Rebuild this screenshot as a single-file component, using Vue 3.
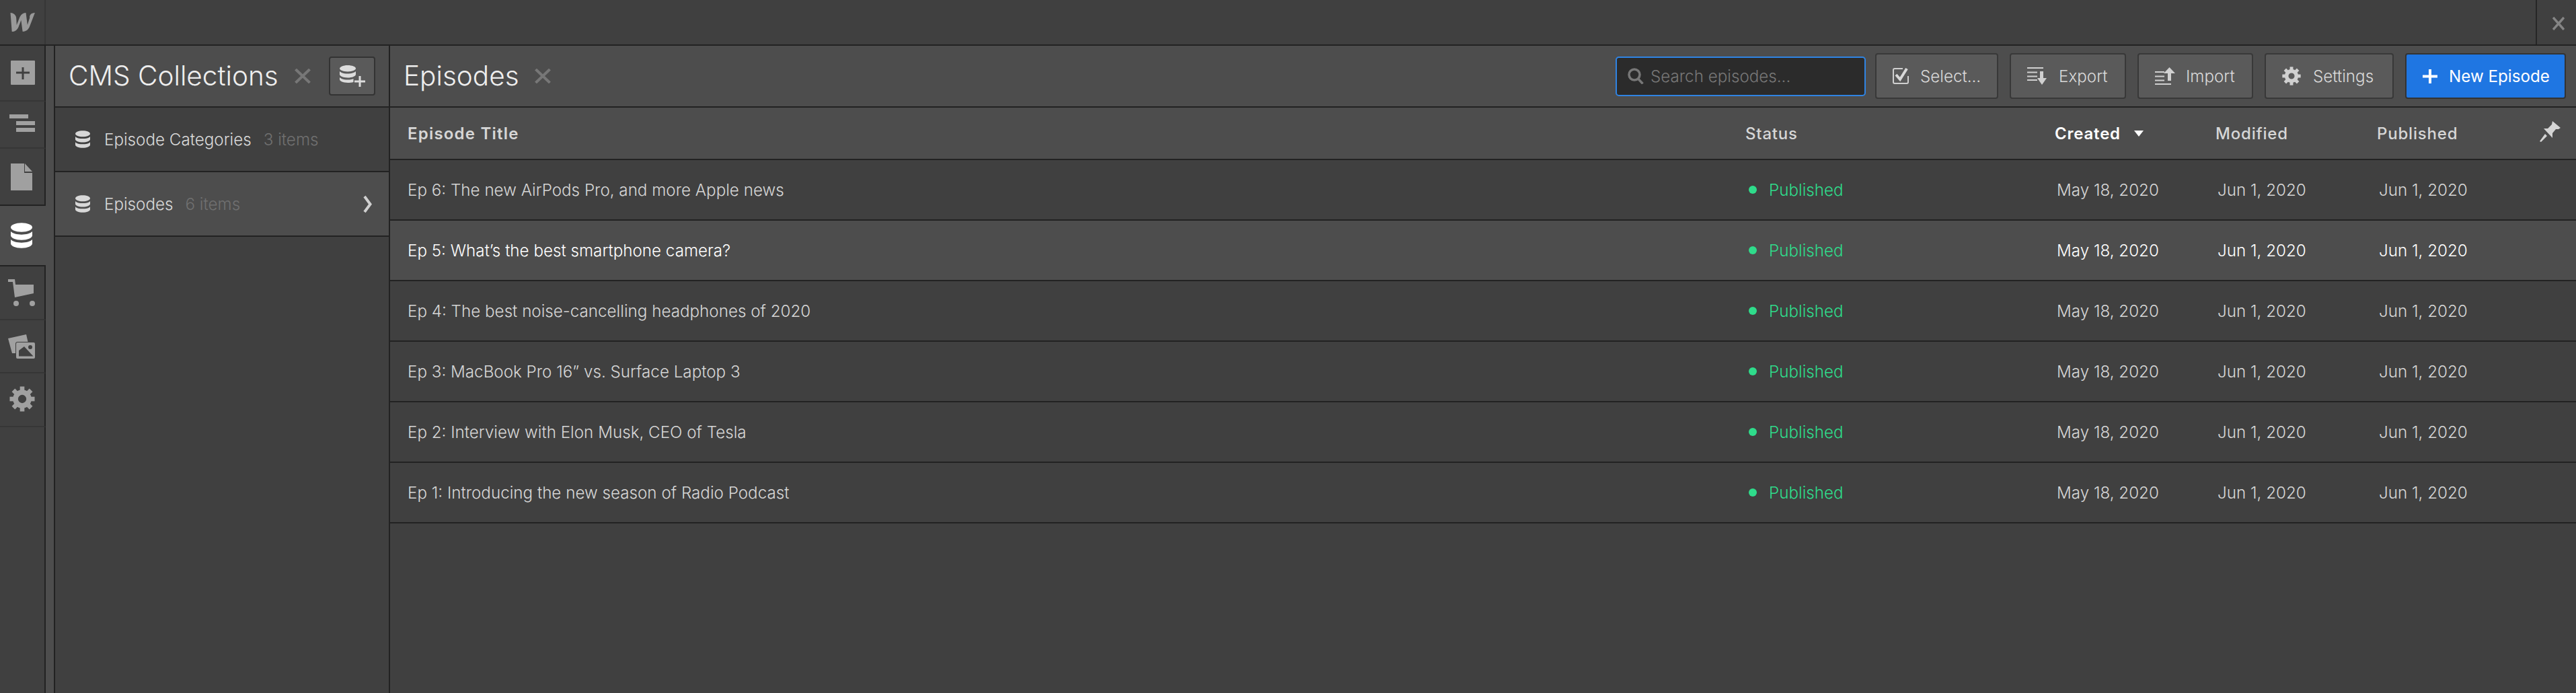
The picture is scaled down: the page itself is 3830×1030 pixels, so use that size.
<script setup>
const rows = [
  { title: 'Ep 6: The new AirPods Pro, and more Apple news' },
  { title: 'Ep 5: What’s the best smartphone camera?', hover: true },
  { title: 'Ep 4: The best noise-cancelling headphones of 2020' },
  { title: 'Ep 3: MacBook Pro 16” vs. Surface Laptop 3' },
  { title: 'Ep 2: Interview with Elon Musk, CEO of Tesla' },
  { title: 'Ep 1: Introducing the new season of Radio Podcast' }
]
const teeth = [0, 45, 90, 135, 180, 225, 270, 315]
const dbPaths = [
  'M12 0C18.6 0 24 2.2 24 5s-5.4 5-12 5S0 7.800 0 5s5.400-5 12-5Z',
  'M0 9.500C2 11.800 7 13 12 13s10-1.200 12-3.500V14c0 2.800-5.400 5-12 5S0 16.800 0 14Z',
  'M0 18.500C2 20.800 7 22 12 22s10-1.200 12-3.500V23c0 2.800-5.400 5-12 5S0 25.800 0 23Z'
]
</script>

<template>
  <div class="app">
    <header class="topbar">
      <div class="logo-cell">
        <svg class="logo" viewBox="0 0 37 28"><path d="M28.700 7.400s-3.100 9.700-3.300 10.300C25.300 17 23 0 23 0c-5.300 0-8.100 3.800-9.600 7.800 0 0-3.800 9.600-4.100 10.400 0-.7-.6-10.300-.6-10.300C8.400 3 3.600 0 0 .1L2.200 28c5.600 0 8.600-3.800 10.200-7.800 0 0 3.400-8.800 3.500-9.200 0 .4 2.400 17 2.400 17 5.600 0 8.600-3.500 10.200-7.400L36.400 0c-5.500 0-8.400 3.700-7.700 7.400Z" /></svg>
      </div>
      <div class="top-fill"></div>
      <div class="top-close">
        <svg class="x-top" viewBox="0 0 18 20"><path d="M1 1l16 18M17 1L1 19" /></svg>
      </div>
    </header>

    <div class="body">
      <nav class="rail">
        <div class="rail-item h-add">
          <svg class="ic-add" viewBox="0 0 36 36"><rect width="36" height="36" rx="1" fill="#a0a0a0" /><path d="M8 16.500h20v3H8zM16.500 10h3v18h-3z" fill="#404040" /></svg>
        </div>
        <div class="rail-item h-list">
          <svg class="ic-list" viewBox="0 0 38 26"><path d="M0 0h28v6H0zM10 10h28v6H10zM10 20h28v6H10z" /></svg>
        </div>
        <div class="rail-item h-page last">
          <svg class="ic-page" viewBox="0 0 32 40"><path d="M0 0h20v14h12v26H0zM21 0l11 12H21z" /></svg>
        </div>
        <div class="rail-item active">
          <svg class="ic-db-big" viewBox="0 0 24 28"><path v-for="d in dbPaths" :key="d" :d="d" /></svg>
        </div>
        <div class="rail-item h-cart">
          <svg class="ic-cart" viewBox="0 0 40 40"><path d="M0 0h10l1 8h27v13l-28 6L7 4H0z" /><circle cx="12" cy="36" r="4" /><circle cx="36" cy="36" r="4" /></svg>
        </div>
        <div class="rail-item h-img">
          <svg class="ic-img" viewBox="0 0 40 36"><path d="M0 6L27 0l2.500 11H14q-3 0-3 3v14H6z" /><path fill-rule="evenodd" d="M14 12h24q2 0 2 2v20q0 2-2 2H14q-2 0-2-2V14q0-2 2-2ZM16 32.500V24l8-6 13.500 14.500ZM33 16a3 3 0 1 0 0 6 3 3 0 0 0 0-6Z" /></svg>
        </div>
        <div class="rail-item h-gear">
          <svg class="ic-gear" viewBox="-20 -20 40 40"><circle r="10.500" fill="none" stroke="#a0a0a0" stroke-width="8" /><rect v-for="t in teeth" :key="t" x="-3.500" y="-19.500" width="7" height="7" :transform="`rotate(${t})`" /></svg>
        </div>
        <div class="rail-fill"></div>
      </nav>

      <aside class="collections">
        <div class="panel-head">
          <h2 class="panel-title">CMS Collections</h2>
          <svg class="x-head" viewBox="0 0 24 22"><path d="M1.500 1l21 20M22.500 1l-21 20" /></svg>
          <button class="add-btn">
            <svg class="ic-db-add" viewBox="0 0 38 32"><g fill="#dcdcdc"><path d="M12 0c6.600 0 12 2.200 12 4.700s-5.400 4.700-12 4.700S0 7.200 0 4.700 5.400 0 12 0Z" /><path d="M0 9c2 2.300 7 3.500 12 3.500s10-1.200 12-3.500v4.500c0 2.800-5.400 5-12 5s-12-2.200-12-5Z" /><path d="M0 18c2 2.300 7 3.500 12 3.500 3 0 6-.4 8.500-1.200v4.600c-2.400.7-5.400 1.100-8.500 1.100-6.600 0-12-2.200-12-5Z" /><path d="M28.500 16h3v6.500H38v3h-6.500V32h-3v-6.500H22v-3h6.500Z" /></g></svg>
          </button>
        </div>
        <div class="coll-row">
          <svg class="ic-db" viewBox="0 0 24 28"><path v-for="d in dbPaths" :key="d" :d="d" /></svg>
          <span class="coll-name">Episode Categories</span>
          <span class="coll-count">3 items</span>
        </div>
        <div class="coll-row selected">
          <svg class="ic-db" viewBox="0 0 24 28"><path v-for="d in dbPaths" :key="d" :d="d" /></svg>
          <span class="coll-name">Episodes</span>
          <span class="coll-count">6 items</span>
          <svg class="chev" viewBox="0 0 13 27"><path d="M2 2l8.500 11.500L2 25" /></svg>
        </div>
      </aside>

      <main class="main">
        <div class="main-head">
          <h2 class="main-title">Episodes</h2>
          <svg class="x-head x-main" viewBox="0 0 24 22"><path d="M1.500 1l21 20M22.500 1l-21 20" /></svg>
          <div class="search">
            <svg class="ic-search" viewBox="0 0 24 24"><circle cx="10" cy="10" r="8" /><path d="M15.500 16l7 7.500" /></svg>
            <span class="search-ph">Search episodes...</span>
          </div>
          <button class="btn w-select">
            <svg class="ic-select" viewBox="0 0 24 24"><path d="M15 1H3a2 2 0 0 0-2 2v18a2 2 0 0 0 2 2h18a2 2 0 0 0 2-2V12" fill="none" stroke="#d0d0d0" stroke-width="2" /><path d="M5 10l6 7L21 1" fill="none" stroke="#d8d8d8" stroke-width="4" /></svg>
            Select...
          </button>
          <button class="btn w-export">
            <svg class="ic-io" viewBox="0 0 30 26"><path d="M0 0h24v2H0zM0 6.500h15v2H0zM0 12.500h15v2H0zM0 18h15v2H0zM19 6h5v10h5L22 26 15 16h4z" /></svg>
            Export
          </button>
          <button class="btn w-import">
            <svg class="ic-io" viewBox="0 0 30 26"><path d="M0 6h14v2H0zM0 12.500h14v2H0zM0 18.500h14v2H0zM0 24h24v2H0zM19 9h-6l8.500-9L30 9h-6v11h-5z" /></svg>
            Import
          </button>
          <button class="btn w-settings">
            <svg class="ic-set" viewBox="-20 -20 40 40"><circle r="10.500" fill="none" stroke="#d0d0d0" stroke-width="8" /><rect v-for="t in teeth" :key="t" x="-3.500" y="-19.500" width="7" height="7" :transform="`rotate(${t})`" /></svg>
            Settings
          </button>
          <button class="btn primary">
            <svg class="ic-plus" viewBox="0 0 22 21"><path d="M9 0h4v8.500h9v4h-9V21H9v-8.500H0v-4h9Z" /></svg>
            New Episode
          </button>
        </div>

        <div class="tr th">
          <div class="strong">Episode Title</div>
          <div>Status</div>
          <div class="sorted strong">Created<svg class="sort" viewBox="0 0 14 9"><path d="M0 0h14L7 9z" /></svg></div>
          <div>Modified</div>
          <div class="last-col">Published<svg class="pin" viewBox="0 0 32 32"><path d="M19 0l12 10-3 2h-4l-5 6v7L6 11h6l6-6zM8 19l3 3-9 9-2-1z" /></svg></div>
        </div>

        <div v-for="r in rows" :key="r.title" class="tr td" :class="{ hover: r.hover }">
          <div>{{ r.title }}</div>
          <div class="status"><i class="dot"></i>Published</div>
          <div class="date">May 18, 2020</div>
          <div class="date">Jun 1, 2020</div>
          <div class="date">Jun 1, 2020</div>
        </div>
      </main>
    </div>
  </div>
</template>

<style>
html, body { margin: 0; background: #404040; }
</style>

<style scoped>
.app {
  width: 3830px;
  height: 1030px;
  display: flex;
  flex-direction: column;
  overflow: hidden;
  background: #404040;
  color: #d9d9d9;
  font-family: Inter, "Liberation Sans", sans-serif;
  font-size: 24.2px;
}
svg { display: block; flex: none; }

.topbar {
  height: 66px;
  display: flex;
  flex: none;
  border-bottom: 2px solid #222;
}
.logo-cell {
  width: 66px;
  border-right: 2px solid #363636;
  display: flex;
  align-items: center;
  justify-content: center;
}
.logo { width: 40px; height: 28px; fill: #999; margin-left: 2px; }
.top-fill { flex: 1; }
.top-close {
  width: 58px;
  border-left: 2px solid #262626;
  display: flex;
  align-items: center;
  justify-content: center;
}
.x-top { width: 18px; height: 20px; fill: none; stroke: #858585; stroke-width: 3.500; margin: 4px 0 0 6px; }

.body { flex: 1; display: flex; min-height: 0; }

.rail {
  width: 80px;
  flex: none;
  display: flex;
  flex-direction: column;
  background: #4d4d4d;
  border-right: 2px solid #222;
}
.rail-item {
  width: 66px;
  box-sizing: content-box;
  background: #404040;
  border-right: 2px solid #222;
  border-bottom: 2px solid #363636;
  display: flex;
  align-items: center;
}
.rail-item svg { fill: #a0a0a0; }
.h-add { height: 81px; }
.h-list { height: 68px; }
.h-page { height: 83px; }
.last { border-bottom-color: #222; }
.active {
  width: 80px;
  height: 88px;
  border: 0;
  background: #4d4d4d;
}
.h-cart { height: 78px; border-top: 2px solid #222; }
.h-img { height: 77px; }
.h-gear { height: 78px; }
.rail-fill {
  width: 66px;
  flex: 1;
  background: #404040;
  border-right: 2px solid #222;
}
.ic-add { width: 36px; height: 36px; margin-left: 16px; margin-top: -1px; }
.ic-list { width: 38px; height: 26px; margin-left: 14px; margin-top: -4px; }
.ic-page { width: 32px; height: 40px; margin-left: 16px; }
.rail-item .ic-db-big { width: 32px; height: 40px; margin-left: 16px; fill: #fff; }
.ic-cart { width: 40px; height: 40px; margin-left: 12px; }
.ic-img { width: 40px; height: 36px; margin-left: 12px; }
.ic-gear { width: 38px; height: 38px; margin-left: 14px; margin-top: -3px; }

.collections {
  width: 496px;
  flex: none;
  border-right: 2px solid #222;
  display: flex;
  flex-direction: column;
}
.panel-head {
  height: 92px;
  flex: none;
  box-sizing: border-box;
  background: #4d4d4d;
  border-bottom: 2px solid #222;
  display: flex;
  align-items: center;
  padding: 0 20px 0 20px;
}
.panel-title, .main-title {
  margin: 0;
  font-size: 40.5px;
  font-weight: 300;
  color: #eee;
  line-height: 1;
  white-space: nowrap;
}
.x-head {
  width: 24px;
  height: 22px;
  fill: none;
  stroke: #777;
  stroke-width: 4;
  margin-left: 24px;
}
.add-btn {
  margin-left: auto;
  width: 69px;
  height: 58px;
  padding: 0;
  box-sizing: border-box;
  background: #5a5a5a;
  border: 2px solid #333;
  border-radius: 4px;
  display: flex;
  align-items: center;
  justify-content: center;
}
.ic-db-add { width: 38px; height: 32px; }
.coll-row {
  height: 96px;
  flex: none;
  box-sizing: border-box;
  border-bottom: 2px solid #222;
  display: flex;
  align-items: center;
  padding: 0 25px 0 30px;
  white-space: nowrap;
  font-weight: 300;
}
.coll-row.selected { background: #4d4d4d; }
.ic-db { width: 22px; height: 26px; fill: #d8d8d8; margin-right: 21px; }
.coll-name { color: #d9d9d9; }
.coll-count { color: #707070; margin-left: 18px; }
.chev { width: 13px; height: 27px; margin-left: auto; fill: none; stroke: #d0d0d0; stroke-width: 4; }

.main { flex: 1; min-width: 0; display: flex; flex-direction: column; }
.main-head {
  height: 92px;
  flex: none;
  box-sizing: border-box;
  background: #4d4d4d;
  border-bottom: 2px solid #222;
  display: flex;
  align-items: center;
  padding: 0 15px 0 20px;
  gap: 17px;
}
.x-main { margin-left: 6px; margin-right: auto; }
.search {
  width: 372px;
  height: 59px;
  box-sizing: border-box;
  background: #2b2b2b;
  border: 2px solid #2f84e4;
  border-radius: 5px;
  display: flex;
  align-items: center;
  padding-left: 16px;
  margin-right: -3px;
}
.ic-search { width: 24px; height: 24px; fill: none; stroke: #777; stroke-width: 3.500; margin-right: 10px; }
.search-ph { color: #777; font-weight: 300; }
.btn {
  height: 68px;
  box-sizing: border-box;
  padding: 0 0 0 24px;
  background: #5a5a5a;
  border: 2px solid #383838;
  border-radius: 4px;
  display: flex;
  align-items: center;
  gap: 18px;
  font: 300 24.2px Inter, "Liberation Sans", sans-serif;
  color: #d9d9d9;
  white-space: nowrap;
}
.w-select { width: 183px; gap: 17px; }
.w-export { width: 173px; gap: 17px; }
.w-import { width: 172px; gap: 16px; }
.w-settings { width: 192px; }
.btn svg { fill: #d0d0d0; }
.ic-select { width: 24px; height: 24px; }
.ic-io { width: 30px; height: 26px; }
.ic-set { width: 28px; height: 28px; }
.btn.primary { width: 239px; gap: 17px; background: #1f76e2; color: #fff; border-color: #333; font-weight: 400; }
.btn.primary svg { fill: #fff; }
.ic-plus { width: 22px; height: 21px; }

.tr {
  display: grid;
  grid-template-columns: 1989px 460px 239px 240px 1fr;
  align-items: center;
  padding-left: 26px;
  box-sizing: border-box;
  border-bottom: 2px solid #222;
  flex: none;
  white-space: nowrap;
}
.th {
  height: 78px;
  background: #4d4d4d;
  font-weight: 500;
  font-size: 24px;
  letter-spacing: 0.8px;
  color: #d6d6d6;
}
.strong { font-weight: 600; letter-spacing: 1.2px; }
.sorted { color: #fff; display: flex; align-items: center; letter-spacing: 0.8px; }
.sort { width: 14px; height: 9px; fill: #fff; margin-left: 20px; }
.last-col { display: flex; align-items: center; justify-content: space-between; padding-right: 22px; }
.pin { width: 32px; height: 32px; fill: #d4d4d4; margin-top: -4px; }
.td {
  height: 90px;
  font-weight: 300;
  color: #d6d6d6;
}
.td.hover { background: #4d4d4d; color: #fff; }
.status { color: #2fdc8b; display: flex; align-items: center; padding-left: 5px; }
.dot {
  width: 12px;
  height: 12px;
  border-radius: 50%;
  background: #2fdc8b;
  margin-right: 18px;
}
.date { padding-left: 3px; }
</style>
